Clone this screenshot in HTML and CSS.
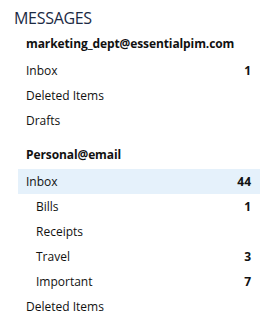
FILE: index.html
```html
<!DOCTYPE html>
<html>
<head>
<meta charset="utf-8">
<link rel="stylesheet" href="styles.css">
</head>
<body>
<div class="panel">
  <div class="title">MESSAGES</div>
  <div class="account">marketing_dept@essentialpim.com</div>
  <div class="row"><span>Inbox</span><b>1</b></div>
  <div class="row"><span>Deleted Items</span></div>
  <div class="row"><span>Drafts</span></div>
  <div class="account gap">Personal@email</div>
  <div class="row selected"><span>Inbox</span><b>44</b></div>
  <div class="row sub"><span>Bills</span><b>1</b></div>
  <div class="row sub"><span>Receipts</span></div>
  <div class="row sub"><span>Travel</span><b>3</b></div>
  <div class="row sub"><span>Important</span><b>7</b></div>
  <div class="row"><span>Deleted Items</span></div>
</div>
</body>
</html>
```
FILE: styles.css
```css
html, body { margin: 0; padding: 0; background: #fff; }
body { font-family: "Open Sans", "Noto Sans", sans-serif; color: #111; }
.panel { padding: 6px 4px 0 18px; display: flex; flex-direction: column; }
.title { font-size: 16px; color: #1b2a44; margin-left: -4px; height: 24px; line-height: 24px; letter-spacing: -0.3px; }
.account { font-size: 12px; font-weight: 700; padding-left: 8px; height: 28px; line-height: 28px; letter-spacing: -0.1px; }
.account.gap { margin-top: 8px; }
.row { display: flex; justify-content: space-between; align-items: center; height: 25px; padding: 0 9px 0 8px; font-size: 12px; }
.row.top { height: 26px; }
.row b { font-weight: 700; }
.row.sub { padding-left: 18px; }
.row.selected { background: #e5f1fb; }
```
